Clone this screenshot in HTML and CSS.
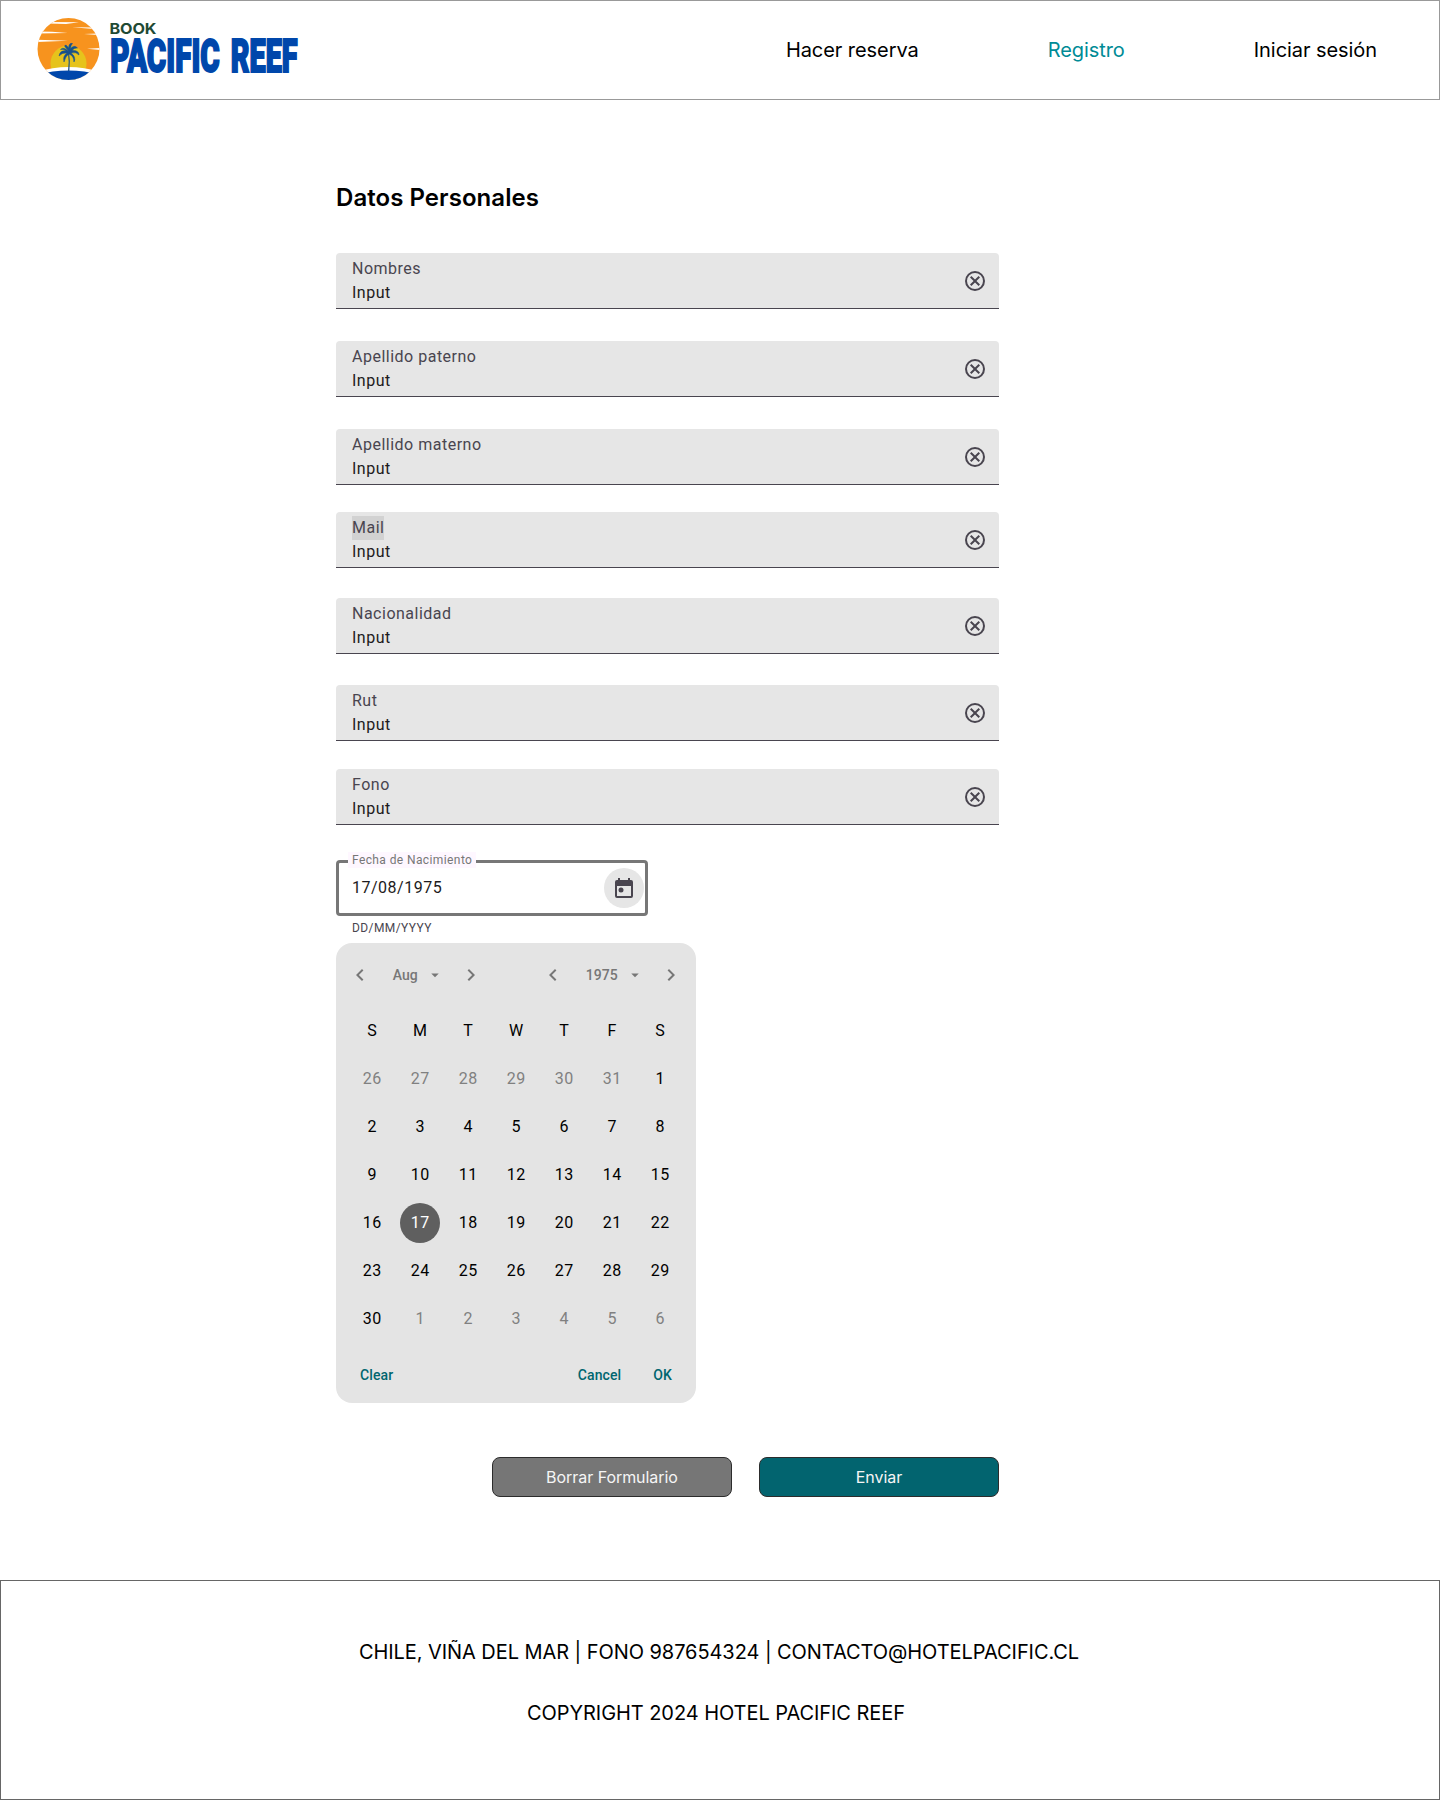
FILE: index.html
```html
<!DOCTYPE html>
<html lang="es">
<head>
<meta charset="utf-8">
<title>Registro | Pacific Reef</title>
<link rel="stylesheet" href="styles.css">
</head>
<body>
<svg width="0" height="0" class="defs" aria-hidden="true">
  <symbol id="cancel" viewBox="0 0 24 24"><path d="M15.590 7 12 10.590 8.410 7 7 8.410 10.590 12 7 15.590 8.410 17 12 13.410 15.590 17 17 15.590 13.410 12 17 8.410zM12 2a10 10 0 1 0 0 20 10 10 0 0 0 0-20zm0 18a8 8 0 1 1 0-16 8 8 0 0 1 0 16z"/></symbol>
  <symbol id="left" viewBox="0 0 24 24"><path d="M15.410 7.410 14 6l-6 6 6 6 1.410-1.410L10.830 12z"/></symbol>
  <symbol id="right" viewBox="0 0 24 24"><path d="M10 6 8.590 7.410 13.170 12l-4.580 4.590L10 18l6-6z"/></symbol>
  <symbol id="down" viewBox="0 0 24 24"><path d="m7 10 5 5 5-5z"/></symbol>
</svg>
<header class="header">
  <a class="logo" href="#">
    <svg width="290" height="70" viewBox="34 14 290 70">
      <clipPath id="disc"><circle cx="68.500" cy="49" r="31"/></clipPath>
      <g clip-path="url(#disc)">
        <rect x="37" y="17" width="64" height="64" fill="#f7931e"/>
        <circle cx="68.500" cy="63.500" r="18" fill="#e6c31c"/>
        <path d="M36 72Q68.500 62 101 72V82H36z" fill="#fff"/>
        <path d="M36 75Q68.500 66 101 75V82H36z" fill="#0047ab"/>
        <path d="M48 22 79 22.300 66 24 48 23.500zM38 31.500 52 31.700 68 33 38 33.500zM72 27.300 94 27.600 94 29zM84 34 98 33.500 98 35zM36 39.800 68 40.800 36 42zM87 48.700 101 48V50z" fill="#fff"/>
      </g>
      <path d="M69 52Q70.500 61 69.400 71H68Q69.300 61 68 53z" fill="#17508c"/>
      <path d="M69 52Q64 46 60.500 49.500 64 48.800 66 51 60 50 59 56 62 52.500 67 53 62.500 56 64 62 65.500 56 69 54 74 56 74 62 76.500 57 71 53 76 51.500 79 55 79 50 72 50.500 74 47.500 77.500 48 74.500 44.500 70.500 48.500 71 44.500 72.500 43.500 69 42.500 68.500 48 66 43.500 64.500 46z" fill="#17508c" stroke="#17508c" stroke-width=".5"/>
      <text transform="translate(109.500 33.700) scale(1.080 1)" class="book" textLength="43.500">BOOK</text>
      <text transform="translate(110.300 72.200) scale(.57 1)" class="name" textLength="192" lengthAdjust="spacingAndGlyphs">PACIFIC</text>
      <text transform="translate(230.800 72.200) scale(.57 1)" class="name" textLength="117" lengthAdjust="spacingAndGlyphs">REEF</text>
    </svg>
  </a>
  <nav class="nav">
    <a href="#">Hacer reserva</a>
    <a href="#" class="active">Registro</a>
    <a href="#">Iniciar sesión</a>
  </nav>
</header>
<main class="main">
  <h1>Datos Personales</h1>
  <div class="field"><div><label>Nombres</label><span>Input</span></div><svg><use href="#cancel"/></svg></div>
  <div class="field"><div><label>Apellido paterno</label><span>Input</span></div><svg><use href="#cancel"/></svg></div>
  <div class="field mother"><div><label>Apellido materno</label><span>Input</span></div><svg><use href="#cancel"/></svg></div>
  <div class="field mail"><div><label>Mail</label><span>Input</span></div><svg><use href="#cancel"/></svg></div>
  <div class="field country"><div><label>Nacionalidad</label><span>Input</span></div><svg><use href="#cancel"/></svg></div>
  <div class="field rut"><div><label>Rut</label><span>Input</span></div><svg><use href="#cancel"/></svg></div>
  <div class="field phone"><div><label>Fono</label><span>Input</span></div><svg><use href="#cancel"/></svg></div>
  <div class="date">
    <label>Fecha de Nacimiento</label>
    <span>17/08/1975</span>
    <i><svg width="24" height="24" viewBox="0 0 24 24"><path d="M19 4h-1V2h-2v2H8V2H6v2H5a2 2 0 0 0-2 2v14a2 2 0 0 0 2 2h14a2 2 0 0 0 2-2V6a2 2 0 0 0-2-2zm0 16H5V10h14z"/><circle cx="9" cy="14" r="2.500"/></svg></i>
  </div>
  <p class="hint">DD/MM/YYYY</p>
  <section class="calendar">
    <div class="picker">
      <div class="month"><svg><use href="#left"/></svg><b>Aug<svg class="caret"><use href="#down"/></svg></b><svg><use href="#right"/></svg></div>
      <div class="year"><svg><use href="#left"/></svg><b>1975<svg class="caret"><use href="#down"/></svg></b><svg><use href="#right"/></svg></div>
    </div>
    <div class="days">
      <span>S</span><span>M</span><span>T</span><span>W</span><span>T</span><span>F</span><span>S</span>
      <span class="out">26</span><span class="out">27</span><span class="out">28</span><span class="out">29</span><span class="out">30</span><span class="out">31</span><span>1</span>
      <span>2</span><span>3</span><span>4</span><span>5</span><span>6</span><span>7</span><span>8</span>
      <span>9</span><span>10</span><span>11</span><span>12</span><span>13</span><span>14</span><span>15</span>
      <span>16</span><span class="selected">17</span><span>18</span><span>19</span><span>20</span><span>21</span><span>22</span>
      <span>23</span><span>24</span><span>25</span><span>26</span><span>27</span><span>28</span><span>29</span>
      <span>30</span><span class="out">1</span><span class="out">2</span><span class="out">3</span><span class="out">4</span><span class="out">5</span><span class="out">6</span>
    </div>
    <div class="actions"><a>Clear</a><a>Cancel</a><a>OK</a></div>
  </section>
  <div class="buttons"><button>Borrar Formulario</button><button class="send">Enviar</button></div>
</main>
<footer class="footer">
  <p>CHILE, VIÑA DEL MAR | FONO 987654324 | CONTACTO@HOTELPACIFIC.CL</p>
  <p class="copy">COPYRIGHT 2024 HOTEL PACIFIC REEF</p>
</footer>
</body>
</html>
```
FILE: styles.css
```css
* { box-sizing: border-box; }
body { margin: 0; width: 1440px; height: 1800px; display: flex; flex-direction: column; background: #fff; color: #000; font-family: Inter, sans-serif; }
p, h1 { margin: 0; }
a { color: inherit; text-decoration: none; }
.defs { display: none; }
.header { height: 100px; flex: none; border: 1px solid #999; display: flex; justify-content: space-between; padding: 13px 62px 0 33px; }
.logo svg { display: block; }
.book { font: 700 15px Inter, sans-serif; fill: #1f4a34; }
.name { font: 900 46.5px Roboto, sans-serif; fill: #0047ab; stroke: #0047ab; stroke-width: 2px; }
.nav { display: flex; gap: 129px; padding-top: 24px; font-size: 20px; line-height: 24px; letter-spacing: -.065px; }
.nav .active { color: #008b96; }
.main { width: 663px; margin-left: 336px; flex: 1; display: flex; flex-direction: column; font-family: Roboto, sans-serif; }
h1 { font: 600 24px/29px Inter, sans-serif; letter-spacing: .05px; margin: 83px 0 41px; }
.field { flex: none; height: 56px; margin-bottom: 32px; padding: 4px 12px 3px 16px; display: flex; align-items: center; justify-content: space-between; background: #e6e6e6; border-bottom: 1px solid #49454f; border-radius: 4px 4px 0 0; }
.field div { display: flex; flex-direction: column; align-items: flex-start; align-self: flex-start; font-size: 16px; line-height: 24px; letter-spacing: .5px; color: #1d1b20; }
.field label { color: #49454f; }
.field svg { width: 24px; height: 24px; fill: #49454f; }
.mother { margin-bottom: 27px; }
.mail { margin-bottom: 30px; }
.mail label { background: #d2d2d2; }
.country { margin-bottom: 31px; }
.rut { margin-bottom: 28px; }
.phone { margin-bottom: 35px; }
.date { position: relative; flex: none; width: 312px; height: 56px; border: 3px solid #777; border-radius: 4px; display: flex; align-items: center; justify-content: space-between; padding: 0 1px 0 13px; font-size: 16px; letter-spacing: .5px; color: #1d1b20; }
.date span { padding-bottom: 2px; }
.date label { position: absolute; left: 9px; top: -11px; padding: 0 4px; background: #fef7ff; color: #777; font-size: 12px; line-height: 16px; letter-spacing: .4px; }
.date i { width: 40px; height: 40px; border-radius: 50%; background: #e6e6e6; display: grid; place-items: center; }
.date svg { fill: #49454f; }
.hint { margin: 4px 0 7px 16px; font-size: 12px; line-height: 16px; letter-spacing: .4px; color: #49454f; }
.calendar { width: 360px; height: 460px; flex: none; border-radius: 16px; background: #e4e4e4; }
.picker { height: 64px; display: flex; align-items: center; justify-content: space-between; padding: 0 12.5px 0 12px; color: #777; font-size: 14px; letter-spacing: .1px; }
.picker div { display: flex; align-items: center; justify-content: space-between; }
.picker svg { width: 24px; height: 24px; fill: #777; }
.picker b { display: flex; align-items: center; font-weight: 500; gap: 8px; padding-left: 5px; }
.picker .caret { width: 18px; height: 18px; }
.month { width: 135.5px; }
.year { width: 142.5px; }
.days { display: grid; grid-template-columns: repeat(7, 48px); grid-auto-rows: 48px; padding-left: 12px; }
.days span { width: 40px; height: 40px; margin: 4px; padding: 0 0 2px .5px; border-radius: 50%; display: grid; place-items: center; font-size: 16px; letter-spacing: .5px; }
.days .out { color: #808080; }
.days .selected { background: #5f5f5f; color: #fff; }
.actions { display: flex; padding: 22px 24px 0; font-size: 14px; line-height: 20px; font-weight: 500; letter-spacing: .1px; color: #00666f; gap: 32px; }
.actions a:first-child { margin-right: auto; }
.buttons { display: flex; justify-content: flex-end; gap: 27px; margin-top: 54px; }
button { width: 240px; height: 40px; padding: 0; border: 1px solid #2c2c2c; border-radius: 8px; background: #767676; color: #f5f5f5; font: 400 16px/16px Inter, sans-serif; letter-spacing: -.05px; }
.send { background: #02646f; }
.footer { height: 220px; flex: none; border: 1px solid #666; padding-top: 59px; font-size: 20px; letter-spacing: -.065px; line-height: 24px; display: flex; flex-direction: column; align-items: center; gap: 37px; }
.footer p { margin-right: 2px; }
.footer .copy { margin-right: 8px; }
```
